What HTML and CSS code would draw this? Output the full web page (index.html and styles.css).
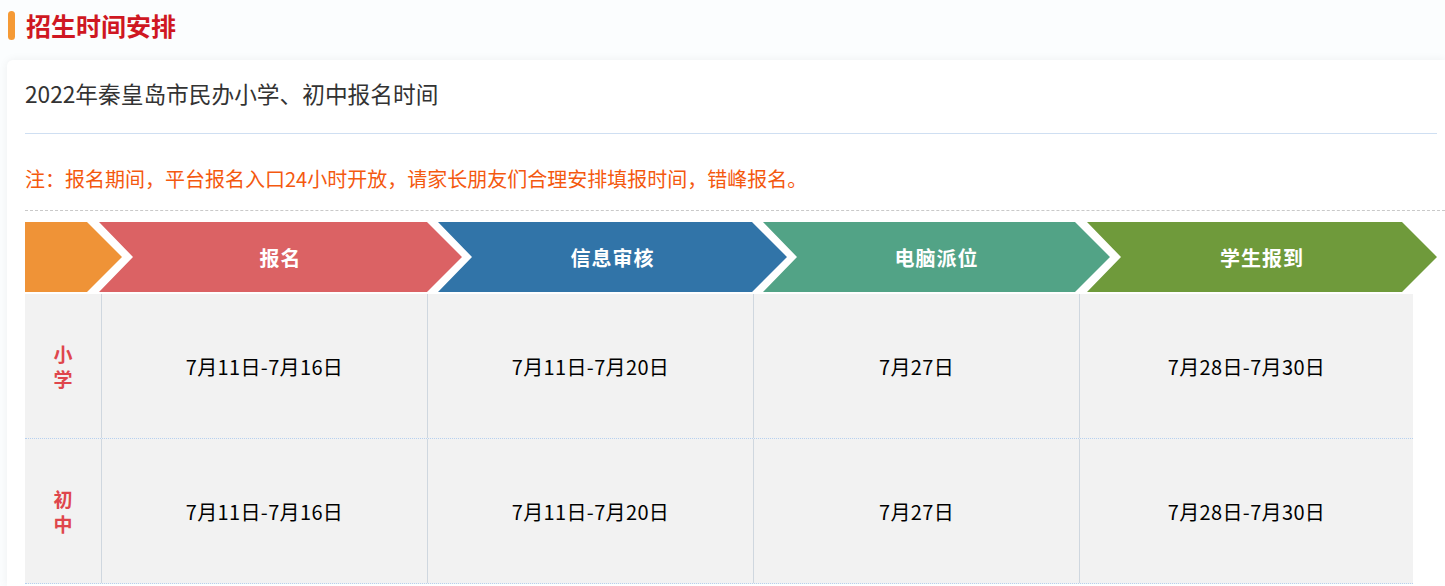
FILE: index.html
```html
<!DOCTYPE html>
<html lang="zh-CN">
<head>
<meta charset="utf-8">
<title>招生时间安排</title>
<link rel="stylesheet" href="styles.css">
</head>
<body>
<div class="page">
  <div class="section-head">
    <span class="mark"></span>
    <h2 class="section-title">招生时间安排</h2>
  </div>
  <div class="card">
    <h3 class="card-title">2022年秦皇岛市民办小学、初中报名时间</h3>
    <p class="note">注：报名期间，平台报名入口24小时开放，请家长朋友们合理安排填报时间，错峰报名。</p>
    <div class="steps">
      <div class="step step-start"></div>
      <div class="step step-red">报名</div>
      <div class="step step-blue">信息审核</div>
      <div class="step step-green">电脑派位</div>
      <div class="step step-olive">学生报到</div>
    </div>
    <div class="table">
      <div class="row">
        <div class="cell cell-head"><span>小</span><span>学</span></div>
        <div class="cell">7月11日-7月16日</div>
        <div class="cell">7月11日-7月20日</div>
        <div class="cell">7月27日</div>
        <div class="cell cell-last">7月28日-7月30日</div>
      </div>
      <div class="row">
        <div class="cell cell-head"><span>初</span><span>中</span></div>
        <div class="cell">7月11日-7月16日</div>
        <div class="cell">7月11日-7月20日</div>
        <div class="cell">7月27日</div>
        <div class="cell cell-last">7月28日-7月30日</div>
      </div>
    </div>
  </div>
</div>
</body>
</html>
```
FILE: styles.css
```css
* { box-sizing: border-box; }
html, body { margin: 0; padding: 0; }
body {
  background: #fbfdfe;
  font-family: "Noto Sans CJK SC", "Noto Sans", sans-serif;
  width: 1445px;
  height: 586px;
  overflow: hidden;
}
.page {
  padding: 10px 0 0 7px;
}
.section-head {
  display: flex;
  align-items: center;
  gap: 11px;
  height: 30px;
  margin-left: 1px;
}
.mark {
  width: 7px;
  height: 29px;
  background: #f59a35;
  border-radius: 4px;
}
.section-title {
  margin: 0;
  font-size: 25px;
  line-height: 30px;
  font-weight: 700;
  color: #cf1722;
}
.card {
  margin-top: 20px;
  width: 1438px;
  height: 526px;
  overflow: hidden;
  background: #fff;
  border-radius: 6px 0 0 0;
  box-shadow: 0 0 10px rgba(0, 0, 0, 0.06);
  padding: 15px 0 0 18px;
}
.card-title {
  margin: 0;
  width: 1412px;
  font-size: 22.7px;
  font-weight: 400;
  color: #333;
  line-height: 38px;
  padding-bottom: 20px;
  border-bottom: 1px solid #cfdff2;
}
.note {
  margin: 0;
  width: 1420px;
  font-size: 20px;
  line-height: 30px;
  color: #f4590f;
  padding: 30px 0 16px;
  border-bottom: 1px dashed #c9c9c9;
}
.steps {
  display: flex;
  height: 70px;
  margin-top: 11px;
}
.step {
  height: 70px;
  display: flex;
  align-items: center;
  justify-content: center;
  color: #fff;
  font-size: 20px;
  font-weight: 700;
  letter-spacing: 1px;
  clip-path: polygon(0 0, calc(100% - 35px) 0, 100% 50%, calc(100% - 35px) 100%, 0 100%, 34px 50%);
  flex: none;
}
.step-start {
  width: 97px;
  background: #ef9337;
  clip-path: polygon(0 0, calc(100% - 35px) 0, 100% 50%, calc(100% - 35px) 100%, 0 100%);
}
.step-red { width: 363px; margin-left: -23px; background: #db6264; }
.step-blue { width: 349px; margin-left: -24px; background: #3174a8; }
.step-green { width: 347px; margin-left: -24px; background: #52a386; }
.step-olive { width: 350px; margin-left: -23px; background: #6f9a3b; }
.table {
  margin-top: 2px;
  width: 1388px;
}
.row {
  display: grid;
  grid-template-columns: 77px 326px 326px 326px 333px;
  height: 145px;
  border-bottom: 1px dotted #b6d0ef;
  background: #f2f2f2;
}
.cell {
  display: flex;
  align-items: center;
  justify-content: center;
  font-size: 20px;
  letter-spacing: 0.35px;
  color: #000;
  border-right: 1px solid #cfd7df;
}
.cell-last { border-right: none; }
.cell-head {
  flex-direction: column;
  color: #df464c;
  font-size: 19px;
  font-weight: 700;
  line-height: 25px;
  letter-spacing: 0;
}
```
